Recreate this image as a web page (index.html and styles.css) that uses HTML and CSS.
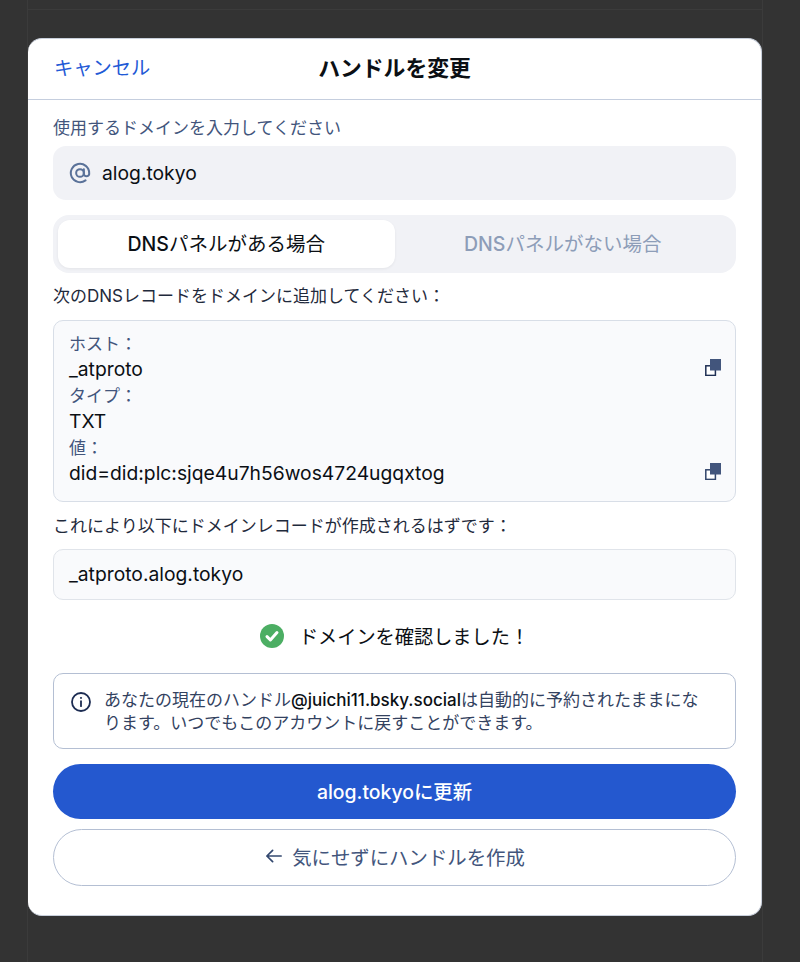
FILE: index.html
```html
<!DOCTYPE html>
<html lang="ja">
<head>
  <meta charset="UTF-8">
  <meta name="viewport" content="width=device-width, initial-scale=1.0">
  <title>ハンドルを変更</title>
  <link rel="stylesheet" href="styles.css">
</head>
<body>
  <div class="backdrop">
    <div class="backdrop-line"></div>
    <div class="modal">
      <div class="modal-header">
        <span class="cancel">キャンセル</span>
        <h1>ハンドルを変更</h1>
      </div>
      <div class="modal-body">
        <label class="field-label label-domain">使用するドメインを入力してください</label>
        <div class="domain-input">
          <svg class="at-icon" width="22" height="22" viewBox="0 0 24 24" fill="none" stroke="#5a7299" stroke-width="2.2" stroke-linecap="round" stroke-linejoin="round">
            <circle cx="12" cy="12" r="4.2"/>
            <path d="M16.2 7.8v5.6a3 3 0 0 0 5.8 0V12a10 10 0 1 0-4 8"/>
          </svg>
          <span>alog.tokyo</span>
        </div>

        <div class="tabs">
          <div class="tab active"><span><b>DNS</b>パネルがある場合</span></div>
          <div class="tab"><span><b>DNS</b>パネルがない場合</span></div>
        </div>

        <p class="field-label label-dark label-add">次のDNSレコードをドメインに追加してください：</p>

        <div class="records">
          <div class="rec-key">ホスト：</div>
          <div class="rec-value">
            <span>_atproto</span>
            <svg class="copy-icon" width="17" height="17" viewBox="0 0 17 17"><rect x="0.8" y="6.8" width="9.6" height="9.6" fill="#fff" stroke="#1f3054" stroke-width="1.5"/><rect x="5" y="0" width="11" height="11.5" fill="#42557c"/></svg>
          </div>
          <div class="rec-key">タイプ：</div>
          <div class="rec-value"><span>TXT</span></div>
          <div class="rec-key">値：</div>
          <div class="rec-value">
            <span>did=did:plc:sjqe4u7h56wos4724ugqxtog</span>
            <svg class="copy-icon" width="17" height="17" viewBox="0 0 17 17"><rect x="0.8" y="6.8" width="9.6" height="9.6" fill="#fff" stroke="#33466b" stroke-width="1.5"/><rect x="5" y="0" width="11" height="11.5" fill="#42557c"/></svg>
          </div>
        </div>

        <p class="field-label label-dark label-result">これにより以下にドメインレコードが作成されるはずです：</p>
        <div class="result-box">_atproto.alog.tokyo</div>

        <div class="verified">
          <svg width="24" height="24" viewBox="0 0 24 24"><circle cx="12" cy="12" r="12" fill="#4cae63"/><path d="M7 12.6l3.4 3.4 6.6-7.4" fill="none" stroke="#fff" stroke-width="3" stroke-linecap="round" stroke-linejoin="round"/></svg>
          <span>ドメインを確認しました！</span>
        </div>

        <div class="notice">
          <svg class="info-icon" width="20" height="20" viewBox="0 0 20 20" fill="none" stroke="#1c2c52" stroke-width="1.8"><circle cx="10" cy="10" r="9"/><path d="M10 9.2v5" stroke-linecap="round"/><circle cx="10" cy="5.9" r="0.6" fill="#1c2c52" stroke-width="1"/></svg>
          <p>あなたの現在のハンドル<strong>@juichi11.bsky.social</strong>は自動的に予約されたままになります。いつでもこのアカウントに戻すことができます。</p>
        </div>

        <button class="btn btn-primary">alog.tokyoに更新</button>
        <button class="btn btn-outline">
          <svg width="16" height="14" viewBox="0 0 16 14" fill="none" stroke="#33486f" stroke-width="1.7" stroke-linecap="round" stroke-linejoin="round"><path d="M15.2 7H0.9M6.6 1.3L0.9 7l5.7 5.7"/></svg>
          <span>気にせずにハンドルを作成</span>
        </button>
      </div>
    </div>
  </div>
</body>
</html>
```

FILE: styles.css
```css
* {
  box-sizing: border-box;
}

body {
  margin: 0;
  background: #333333;
  font-family: Inter, "Noto Sans CJK JP", sans-serif;
  color: #0b0f14;
}

.backdrop {
  width: 736px;
  height: 962px;
  margin-left: 27px;
  padding-top: 38px;
  border-left: 1px solid #3b3b3b;
  border-right: 1px solid #3b3b3b;
  position: relative;
}

.backdrop-line {
  position: absolute;
  top: 9px;
  left: 0;
  right: 0;
  height: 1px;
  background: #3b3b3b;
}

.modal {
  width: 734px;
  height: 878px;
  background: #fff;
  border-radius: 14px;
  border: 1px solid #c8cfdb;
  border-width: 1px 1px 1px 0;
  overflow: hidden;
}

.modal-header {
  height: 61px;
  padding-bottom: 6px;
  border-bottom: 1px solid #c5cede;
  display: flex;
  align-items: center;
  justify-content: center;
  position: relative;
}

h1 {
  margin: 0;
  font-size: 21.8px;
  font-weight: 700;
  color: #0b0f14;
}

.cancel {
  position: absolute;
  left: 26px;
  top: 14px;
  font-size: 19.3px;
  color: #1f5ad6;
}

.modal-body {
  padding: 0 25px;
}

.field-label {
  display: block;
  margin: 0;
  font-size: 17px;
  line-height: 24px;
  color: #42557c;
}

.label-domain {
  margin-top: 16px;
  margin-bottom: 6px;
}

.label-dark {
  color: #1f2a3c;
}

.label-add {
  margin-top: 11px;
  margin-bottom: 12px;
}

.label-result {
  margin-top: 12px;
  margin-bottom: 11px;
}

.domain-input {
  height: 54px;
  background: #f1f2f6;
  border-radius: 13px;
  display: flex;
  align-items: center;
  gap: 11px;
  padding-left: 16px;
  padding-bottom: 1px;
  font-size: 19.3px;
}

.tabs {
  height: 58px;
  margin-top: 15px;
  padding: 5px;
  background: #f1f2f6;
  border-radius: 16px;
  display: flex;
}

.tab {
  flex: 1;
  display: flex;
  align-items: center;
  justify-content: center;
  padding-bottom: 3px;
  font-size: 19.5px;
  color: #8d9db8;
  border-radius: 12px;
}

.tab b {
  font-weight: 500;
}

.tab.active {
  background: #fff;
  color: #0b0f14;
  box-shadow: 0 1px 3px rgba(0, 0, 0, 0.06);
}

.records {
  height: 182px;
  padding: 11px 15px 0;
  background: #f9fafc;
  border: 1px solid #d8dee7;
  border-radius: 10px;
}

.rec-key {
  font-size: 17px;
  line-height: 24px;
  color: #42557c;
}

.rec-value {
  height: 28px;
  padding-bottom: 2px;
  display: flex;
  align-items: center;
  justify-content: space-between;
  font-size: 19.3px;
  line-height: 26px;
}

.copy-icon {
  margin-right: -2px;
  margin-bottom: 3px;
}

.result-box {
  height: 51px;
  padding-left: 15px;
  padding-bottom: 1px;
  display: flex;
  align-items: center;
  background: #f9fafc;
  border: 1px solid #e0e4ea;
  border-radius: 10px;
  font-size: 19.3px;
}

.verified {
  height: 73px;
  display: flex;
  align-items: center;
  justify-content: center;
  gap: 15px;
  padding-bottom: 1px;
  font-size: 19.2px;
}

.notice {
  height: 76px;
  padding: 15px 24px 0 17px;
  display: flex;
  gap: 13px;
  background: #fff;
  border: 1px solid #b4bfd3;
  border-radius: 10px;
}

.info-icon {
  flex: none;
  margin-top: 3px;
}

.notice p {
  margin: 0;
  font-size: 17px;
  line-height: 23px;
  color: #33425f;
}

.notice strong {
  font-weight: 500;
  color: #0b0f14;
}

.btn {
  display: flex;
  align-items: center;
  justify-content: center;
  width: 100%;
  font-family: inherit;
  font-size: 19.4px;
  border-radius: 30px;
}

.btn-primary {
  height: 55px;
  margin-top: 15px;
  padding-bottom: 3px;
  background: #2458cf;
  border: none;
  color: #fff;
  font-weight: 500;
}

.btn-outline {
  height: 57px;
  margin-top: 10px;
  gap: 10px;
  padding: 0 0 3px 2px;
  background: #fff;
  border: 1px solid #b4bfd3;
  color: #42557c;
}
```
